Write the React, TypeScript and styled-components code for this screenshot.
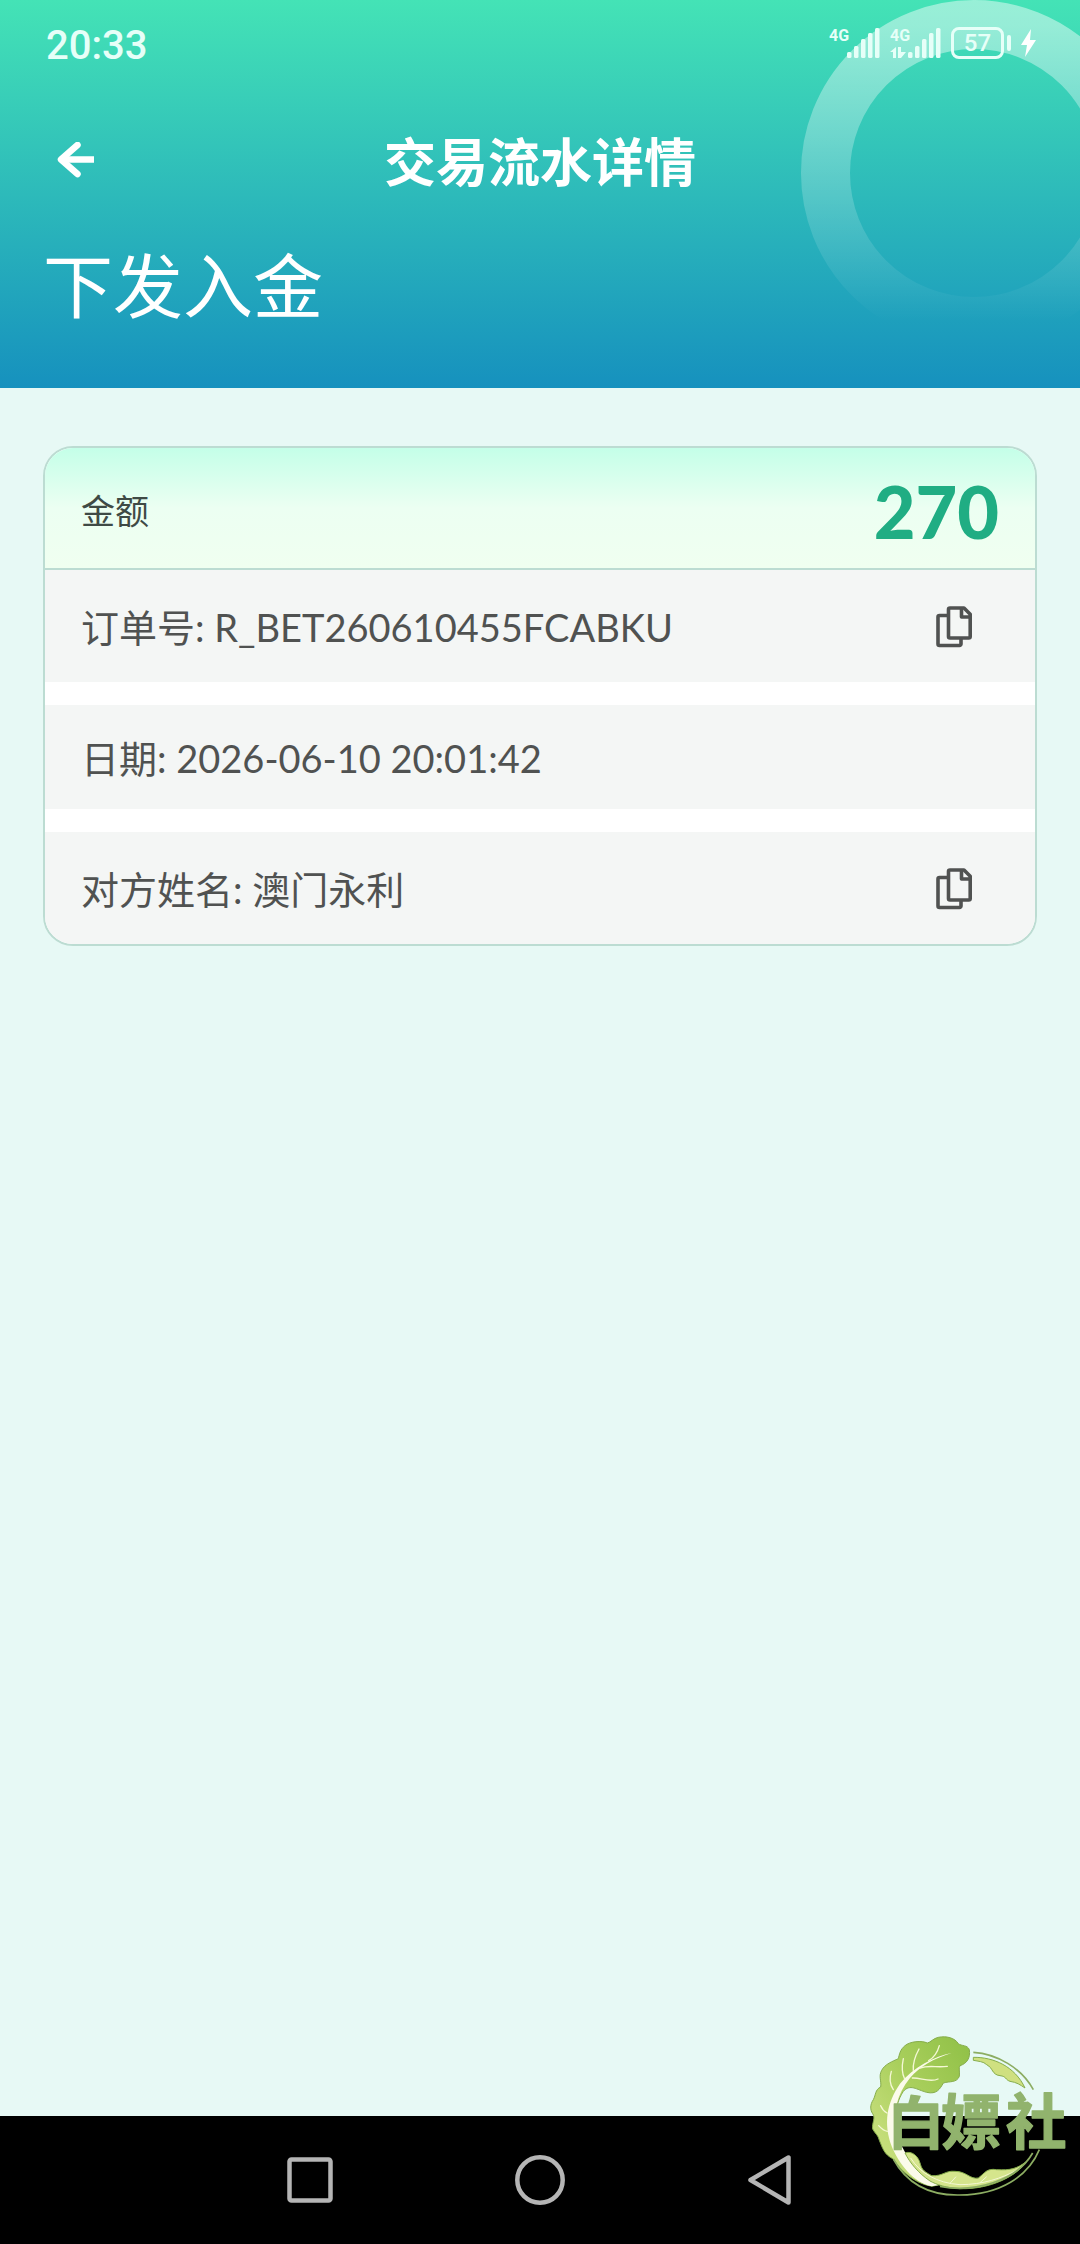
import React from 'react'
import styled, { createGlobalStyle } from 'styled-components'

const GlobalStyle = createGlobalStyle`
  * {
    box-sizing: border-box;
  }
  body {
    margin: 0;
    font-family: Lato, 'Noto Sans CJK SC', sans-serif;
    background-color: #e7f9f5;
  }
`

const Screen = styled.div`
  display: flex;
  flex-direction: column;
  min-height: 100vh;
`

const Header = styled.header`
  position: relative;
  overflow: hidden;
  padding-bottom: 52px;
  color: #fff;
  background: linear-gradient(180deg, #44e3b6 0%, #1691be 100%);
`

const Ring = styled.svg`
  position: absolute;
  top: 0;
  right: -67px;
  width: 346px;
  height: 346px;
`

const StatusBar = styled.div`
  position: relative;
  display: flex;
  align-items: center;
  justify-content: space-between;
  height: 88px;
  padding: 4px 44px 0 46px;
  color: #e6fff8;
`

const Clock = styled.time`
  font-family: Roboto, sans-serif;
  font-size: 40px;
  font-weight: 500;
  line-height: 48px;
`

const StatusIcons = styled.div`
  display: flex;
  align-items: center;
  gap: 10px;
  padding-bottom: 6px;
`

const Battery = styled.div`
  display: flex;
  align-items: center;
  gap: 3px;
`

const BatteryBody = styled.span`
  display: flex;
  align-items: center;
  justify-content: center;
  width: 53px;
  height: 32px;
  border: 3px solid currentColor;
  border-radius: 8px;
  font-family: Roboto, sans-serif;
  font-size: 24px;
  font-weight: 500;
  line-height: 26px;
`

const BatteryCap = styled.span`
  width: 4px;
  height: 16px;
  border-radius: 2px;
  background-color: currentColor;
`

const TitleBar = styled.div`
  position: relative;
  display: grid;
  grid-template-columns: 64px 1fr 64px;
  align-items: center;
  height: 148px;
  padding: 0 44px;
`

const IconButton = styled.button`
  display: flex;
  align-items: center;
  justify-content: center;
  width: 64px;
  height: 64px;
  padding: 0;
  border: 0;
  color: inherit;
  background: none;
  cursor: pointer;
`

const Title = styled.h1`
  margin: 0;
  font-size: 52px;
  font-weight: 700;
  line-height: 72px;
  text-align: center;
`

const Subtitle = styled.h2`
  position: relative;
  margin: 0;
  padding: 0 43px;
  font-size: 70px;
  font-weight: 400;
  line-height: 100px;
`

const Content = styled.main`
  flex: 1;
  padding: 58px 43px;
`

const Card = styled.section`
  overflow: hidden;
  border: 2px solid #bcdcd2;
  border-radius: 30px;
  background-color: #fff;
`

const AmountRow = styled.div`
  display: flex;
  align-items: center;
  justify-content: space-between;
  height: 122px;
  padding: 6px 36px 0;
  border-bottom: 2px solid #bcdcd2;
  background: linear-gradient(180deg, #c4ffe8 0%, #ecfff2 50%, #f0fff0 100%);
`

const AmountLabel = styled.span`
  color: #3f4a45;
  font-size: 34px;
  line-height: 48px;
`

const Amount = styled.strong`
  color: #20ad83;
  font-size: 72px;
  font-weight: 900;
  line-height: 88px;
`

const Details = styled.div`
  display: flex;
  flex-direction: column;
  gap: 23px;
`

const DetailRow = styled.div`
  display: flex;
  align-items: center;
  justify-content: space-between;
  min-height: 104px;
  padding: 25px 49px 23px 36px;
  color: #505251;
  background-color: #f4f6f5;
  font-size: 38px;
  line-height: 56px;
`

const NavBar = styled.nav`
  position: relative;
  display: flex;
  align-items: center;
  justify-content: center;
  gap: 166px;
  height: 128px;
  color: #b5b5b5;
  background-color: #000;
`

const Logo = styled.svg`
  position: absolute;
  right: 10px;
  bottom: 46px;
  width: 200px;
  height: 164px;
`

const DETAILS = [
  { label: '订单号', value: 'R_BET260610455FCABKU', copyable: true },
  { label: '日期', value: '2026-06-10 20:01:42', copyable: false },
  { label: '对方姓名', value: '澳门永利', copyable: true },
]

const BARS = [6, 12, 19, 25, 30]

const Signal = ({ active = false }: { active?: boolean }) => (
  <svg width="51" height="32" viewBox="0 0 51 32" fill="currentColor">
    <text x="0" y="14" fontFamily="Roboto" fontSize="16" fontWeight="700">
      4G
    </text>
    {BARS.map((height, i) => (
      <rect
        key={height}
        x={18 + i * 7}
        y={31 - height}
        width="4.5"
        height={height}
        rx="1.5"
      />
    ))}
    {active && <path d="M6 20v11H3v-6H0zM8 20h3v5h5l-5 6H8z" />}
  </svg>
)

const CopyIcon = () => (
  <svg
    width="36"
    height="42"
    viewBox="0 0 36 42"
    fill="none"
    stroke="currentColor"
    strokeWidth="3.6"
    strokeLinejoin="round"
  >
    <path d="M11 9.5H3.5A1.5 1.5 0 0 0 2 11v27a1.500 1.500 0 0 0 1.500 1.500h20A1.500 1.500 0 0 0 25 38v-5" />
    <path d="M14 2h14l6.200 6.200v22.300a1.500 1.500 0 0 1-1.500 1.500H14a1.500 1.500 0 0 1-1.500-1.500v-27A1.500 1.500 0 0 1 14 2z" />
    <path d="M25.500 2v9h9" />
  </svg>
)

const CabbageLogo = () => (
  <Logo viewBox="60 73 600 492" role="img" aria-label="白嫖社">
    <defs>
      <linearGradient id="leaf" x1="1" y1="0" x2="0" y2="1">
        <stop offset="0" stopColor="#8fc046" />
        <stop offset="0.45" stopColor="#a9cf5c" />
        <stop offset="1" stopColor="#d5e68c" />
      </linearGradient>
    </defs>
    <path
      fill="url(#leaf)"
      stroke="#86ad4b"
      strokeWidth="3"
      d="M358 120C352 105 335 110 325 102C315 85 290 78 265 83C250 86 242 98 232 100C215 92 180 95 165 108C150 120 148 135 145 147C128 155 105 163 95 182C85 200 95 215 92 232C75 240 78 255 70 270C60 285 60 300 68 312C78 325 65 340 68 358C75 372 85 376 88 392C98 415 102 435 130 448C150 480 190 520 245 530L270 525C210 505 165 450 148 400C132 350 130 290 160 245C180 222 200 240 230 248C260 255 270 238 280 220C300 214 320 220 328 200C330 185 325 175 330 168C350 162 362 145 358 120Z"
    />
    <path
      fill="#fbfbea"
      d="M305 130C255 140 190 172 150 222C110 280 100 340 125 410C145 460 190 520 245 530L270 525C200 490 158 430 140 370C127 310 140 255 180 205C210 170 250 147 305 130Z"
    />
    <g fill="none" stroke="#f4f8d4" strokeWidth="4" strokeLinecap="round">
      <path d="M236 153C250 145 262 130 268 108" />
      <path d="M190 182C188 160 195 140 207 118" />
      <path d="M164 208C155 190 155 170 160 147" />
      <path d="M130 240C120 225 117 207 124 185" />
      <path d="M210 175C240 165 260 175 292 170" />
      <path d="M187 205C210 203 240 220 264 208" />
      <path d="M111 310C102 305 96 298 92 288" />
      <path d="M112 365C104 364 94 357 86 348" />
    </g>
    <path
      fill="#d5e58c"
      stroke="#86ad4b"
      strokeWidth="3"
      d="M165 430C185 422 205 440 210 460C215 475 215 482 245 498C280 500 285 482 315 485C350 485 360 510 385 505C405 490 410 475 440 480C480 482 500 478 530 455C500 500 420 540 330 537C290 535 260 525 240 514C205 490 180 460 165 430Z"
    />
    <path
      fill="none"
      stroke="#f4f8d4"
      strokeWidth="3"
      d="M182 445C210 490 260 520 330 525C400 525 455 505 500 482M300 521l18-20M390 519l20-18"
    />
    <path
      fill="#cfe080"
      stroke="#86ad4b"
      strokeWidth="3"
      d="M370 143C430 142 495 170 525 235C510 225 500 218 480 215C465 210 470 200 450 198C425 195 430 175 410 165C400 155 385 155 370 152Z"
    />
    <g fill="none" stroke="#8cad62" strokeWidth="5">
      <path d="M370 128C440 132 515 175 550 240" />
      <path d="M130 448C175 530 250 558 330 556C450 555 535 500 568 420" />
      <path d="M270 530C370 550 500 515 548 430" />
    </g>
    <g
      fill="#91b36d"
      stroke="#91b36d"
      strokeWidth="4"
      strokeLinejoin="round"
      fontFamily="'Noto Sans CJK SC', sans-serif"
      fontWeight="700"
    >
      <text y="402">
        <tspan x="112" fontSize="172">
          白
        </tspan>
        <tspan x="274" fontSize="180">
          嫖
        </tspan>
        <tspan x="468" fontSize="182">
          社
        </tspan>
      </text>
    </g>
  </Logo>
)

const App = () => (
  <>
    <GlobalStyle />
    <Screen>
      <Header>
        <Ring viewBox="0 0 346 346">
          <defs>
            <linearGradient id="ring" x1="0" y1="0" x2="0" y2="1">
              <stop offset="0" stopColor="#fff" stopOpacity="0.45" />
              <stop offset="1" stopColor="#fff" stopOpacity="0" />
            </linearGradient>
          </defs>
          <circle
            cx="173"
            cy="173"
            r="148.5"
            fill="none"
            stroke="url(#ring)"
            strokeWidth="49"
          />
        </Ring>
        <StatusBar>
          <Clock>20:33</Clock>
          <StatusIcons>
            <Signal />
            <Signal active />
            <Battery>
              <BatteryBody>57</BatteryBody>
              <BatteryCap />
            </Battery>
            <svg width="15" height="30" viewBox="0 0 15 30" fill="#fff">
              <path d="M10 1L0 17h6L4 29l11-17H9z" />
            </svg>
          </StatusIcons>
        </StatusBar>
        <TitleBar>
          <IconButton type="button" aria-label="返回">
            <svg
              width="40"
              height="40"
              viewBox="0 0 40 40"
              fill="none"
              stroke="currentColor"
              strokeWidth="6.5"
              strokeLinejoin="round"
            >
              <path d="M38 17.5H6" />
              <path d="M21.500 3L5 17.500 21.500 32" strokeLinecap="round" />
            </svg>
          </IconButton>
          <Title>交易流水详情</Title>
        </TitleBar>
        <Subtitle>下发入金</Subtitle>
      </Header>
      <Content>
        <Card>
          <AmountRow>
            <AmountLabel>金额</AmountLabel>
            <Amount>270</Amount>
          </AmountRow>
          <Details>
            {DETAILS.map(({ label, value, copyable }) => (
              <DetailRow key={label}>
                <span>
                  {label}: {value}
                </span>
                {copyable && (
                  <IconButton type="button" aria-label={`复制${label}`}>
                    <CopyIcon />
                  </IconButton>
                )}
              </DetailRow>
            ))}
          </Details>
        </Card>
      </Content>
      <NavBar>
        <IconButton type="button" aria-label="最近任务">
          <svg width="46" height="46" viewBox="0 0 46 46" fill="none">
            <rect
              x="2.5"
              y="2.5"
              width="41"
              height="41"
              rx="2"
              stroke="currentColor"
              strokeWidth="4.5"
            />
          </svg>
        </IconButton>
        <IconButton type="button" aria-label="主屏幕">
          <svg width="50" height="50" viewBox="0 0 50 50" fill="none">
            <circle
              cx="25"
              cy="25"
              r="22.7"
              stroke="currentColor"
              strokeWidth="4.5"
            />
          </svg>
        </IconButton>
        <IconButton type="button" aria-label="后退">
          <svg width="44" height="50" viewBox="0 0 44 50" fill="none">
            <path
              d="M40.500 2.500v45L2.500 25z"
              stroke="currentColor"
              strokeWidth="4.5"
              strokeLinejoin="round"
            />
          </svg>
        </IconButton>
        <CabbageLogo />
      </NavBar>
    </Screen>
  </>
)

export default App
